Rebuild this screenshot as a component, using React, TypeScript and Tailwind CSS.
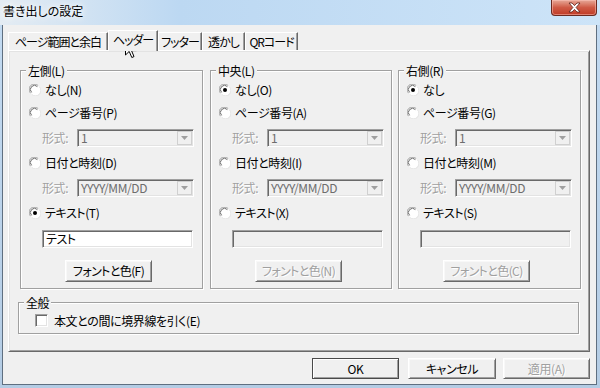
import React from 'react';

const FONT = "[font-family:'Noto_Sans_CJK_JP',sans-serif] [font-feature-settings:'palt'] tracking-[-0.4px]";

const sunken =
  'border-t border-l border-t-[#a0a0a0] border-l-[#a0a0a0] border-b border-r border-b-white border-r-white shadow-[inset_1px_1px_0_#696969,inset_-1px_-1px_0_#e3e3e3]';
const raised =
  'border-t border-l border-t-white border-l-white border-b border-r border-b-[#696969] border-r-[#696969] shadow-[inset_1px_1px_0_#f8f8f8,inset_-1px_-1px_0_#a0a0a0]';
const grayText = 'text-[#a0a0a0] [text-shadow:1px_1px_0_#fff]';

const Radio = ({ checked }: { checked?: boolean }) => (
  <svg width="12" height="12" viewBox="0 0 12 12" className="shrink-0">
    <circle cx="6" cy="6" r="5.5" fill="#fff" />
    <path d="M1.6 9.2 A5 5 0 0 1 9.2 1.6" fill="none" stroke="#a0a0a0" />
    <path d="M2.6 8.4 A4 4 0 0 1 8.4 2.6" fill="none" stroke="#696969" />
    <path d="M10.4 2.8 A5 5 0 0 1 2.8 10.4" fill="none" stroke="#e3e3e3" />
    {checked && <circle cx="6" cy="6" r="2" fill="#000" />}
  </svg>
);

const RadioRow = ({ label, checked, mt }: { label: string; checked?: boolean; mt: string }) => (
  <div className={`${mt} h-[16px] pl-[8px] flex items-center gap-[4px] text-[12px] leading-[16px] text-black`}>
    <Radio checked={checked} />
    <span>{label}</span>
  </div>
);

const Combo = ({ value, mt }: { value: string; mt: string }) => (
  <div className={`${mt} h-[18px] pl-[21px] flex items-center text-[12px]`}>
    <span className={`w-[35px] ${grayText}`}>形式:</span>
    <div className={`w-[117px] h-[18px] flex items-stretch bg-[#f0f0f0] ${sunken}`}>
      <span className="flex-1 pl-[3px] pt-[1px] leading-[14px] text-[#6d6d6d] overflow-hidden">{value}</span>
      <span className="w-[15px] m-[1px] flex items-center justify-center bg-[#f0f0f0] border border-[#d0d0d0]">
        <svg width="7" height="4" viewBox="0 0 7 4">
          <path d="M0 0 H7 L3.5 4 Z" fill="#a0a0a0" />
        </svg>
      </span>
    </div>
  </div>
);

const Group = ({ title, children, className }: { title: string; children: React.ReactNode; className: string }) => (
  <div className={`border border-[#a0a0a0] shadow-[inset_1px_1px_0_#fff,1px_1px_0_#fff] ${className}`}>
    <span className="block w-fit -mt-[8px] ml-[5px] px-[2px] h-[15px] leading-[15px] text-[12px] bg-[#f0f0f0] text-black">
      {title}
    </span>
    {children}
  </div>
);

type Col = {
  title: string;
  none: string;
  page: string;
  date: string;
  text: string;
  font: string;
  noneChecked: boolean;
  enabled: boolean;
  width: string;
};

const cols: Col[] = [
  { title: '左側(L)', none: 'なし(N)', page: 'ページ番号(P)', date: '日付と時刻(D)', text: 'テキスト(T)', font: 'フォントと色(F)', noneChecked: false, enabled: true, width: 'w-[183px]' },
  { title: '中央(L)', none: 'なし(O)', page: 'ページ番号(A)', date: '日付と時刻(I)', text: 'テキスト(X)', font: 'フォントと色(N)', noneChecked: true, enabled: false, width: 'w-[182px]' },
  { title: '右側(R)', none: 'なし', page: 'ページ番号(G)', date: '日付と時刻(M)', text: 'テキスト(S)', font: 'フォントと色(C)', noneChecked: true, enabled: false, width: 'w-[183px]' },
];

const Column = ({ c }: { c: Col }) => (
  <Group title={c.title} className={`${c.width} pb-[6px]`}>
    <RadioRow mt="mt-[4px]" label={c.none} checked={c.noneChecked} />
    <RadioRow mt="mt-[7px]" label={c.page} />
    <Combo mt="mt-[8px]" value="1" />
    <RadioRow mt="mt-[8px]" label={c.date} />
    <Combo mt="mt-[8px]" value="YYYY/MM/DD" />
    <RadioRow mt="mt-[8px]" label={c.text} checked={!c.noneChecked} />
    <div
      className={`mt-[9px] ml-[21px] w-[151px] h-[18px] pl-[3px] text-[12px] leading-[16px] text-black ${sunken} ${c.enabled ? 'bg-white' : 'bg-[#f0f0f0]'}`}
    >
      {c.enabled ? 'テスト' : ''}
    </div>
    <div
      className={`mt-[12px] ml-[44px] w-[87px] h-[22px] flex items-center justify-center text-[12px] tracking-[-0.6px] bg-[#f0f0f0] ${raised} ${c.enabled ? 'text-black' : grayText}`}
    >
      {c.font}
    </div>
  </Group>
);

const tabs = [
  { label: 'ページ範囲と余白', w: 'w-[100px]' },
  { label: 'ヘッダー', w: 'w-[50px]', active: true },
  { label: 'フッター', w: 'w-[44px]' },
  { label: '透かし', w: 'w-[43px]' },
  { label: 'QRコード', w: 'w-[53px]' },
];

const Cursor = () => (
  <svg width="13" height="20" viewBox="0 0 13 20" className="absolute left-[125px] top-[39px]">
    <path d="M0.5 0.5 V16 L4.2 12.4 L6.8 18.5 L9 17.6 L6.5 11.6 H11.5 Z" fill="#fff" stroke="#000" strokeLinejoin="miter" />
  </svg>
);

export default function App() {
  return (
    <div className={`relative w-[600px] h-[388px] flex flex-col overflow-hidden bg-gradient-to-b from-[#c3dbf2] to-[#b4cce4] ${FONT}`}>
      {/* title bar */}
      <div className="h-[25px] shrink-0 flex items-start justify-between bg-gradient-to-r from-[#e4ecf3] via-[#bcd8f2] via-30% to-[#cde4f8]">
        <span className="ml-[3px] mt-[2px] text-[12px] leading-[17px] tracking-normal text-black [text-shadow:0_0_6px_#fff,0_0_10px_#fff]">
          書き出しの設定
        </span>
        <div className="mr-[3px] w-[46px] h-[16px] flex items-center justify-center rounded-b-[4px] border border-t-0 border-[#6b2a20] bg-gradient-to-b from-[#e6a898] via-[#cf5a45] to-[#c03a25] shadow-[inset_0_0_0_1px_rgba(255,200,190,0.5)]">
          <svg width="13" height="11" viewBox="0 0 13 11">
            <path
              d="M1 1 H4 L6.5 3.6 L9 1 H12 L8.1 5.5 L12 10 H9 L6.5 7.4 L4 10 H1 L4.9 5.5 Z"
              fill="#fff"
              stroke="#5a2018"
              strokeWidth="0.8"
              strokeLinejoin="round"
            />
          </svg>
        </div>
      </div>

      {/* client */}
      <div className="flex-1 ml-[2px] mr-[3px] mb-[3px] flex flex-col bg-[#f0f0f0] border-l border-r border-b border-[#5f6f80] pl-[5px] pr-[6px]">
        {/* tabs */}
        <div className="mt-[5px] h-[20px] flex items-end text-[12px] tracking-[-1px] text-black">
          {tabs.map((t) =>
            t.active ? (
              <div
                key={t.label}
                className={`${t.w} h-[21px] -mb-px relative z-10 flex items-center justify-center bg-[#f0f0f0] border-t border-l border-white border-r border-r-[#696969] shadow-[inset_-1px_0_0_#a0a0a0] pb-[2px]`}
              >
                {t.label}
              </div>
            ) : (
              <div
                key={t.label}
                className={`${t.w} h-[18px] flex items-center justify-center bg-[#f0f0f0] border-t border-l border-white border-r border-r-[#696969] shadow-[inset_-1px_0_0_#a0a0a0]`}
              >
                {t.label}
              </div>
            )
          )}
        </div>

        {/* tab page */}
        <div className="h-[302px] shrink-0 flex flex-col pt-[19px] pl-[9px] bg-[#f0f0f0] border-t border-l border-white border-b border-r border-b-[#696969] border-r-[#696969] shadow-[inset_1px_1px_0_#e3e3e3,inset_-1px_-1px_0_#a0a0a0]">
          <div className="flex pl-[2px] gap-[7px]">
            <Column c={cols[0]} />
            <Column c={cols[1]} />
            <div className="-ml-px">
              <Column c={cols[2]} />
            </div>
          </div>
          <Group title="全般" className="mt-[13px] w-[561px] pb-[6px]">
            <div className="mt-[4px] h-[13px] pl-[16px] flex items-center gap-[6px] text-[12px] text-black">
              <span className={`w-[13px] h-[13px] bg-white ${sunken}`} />
              <span>本文との間に境界線を引く(E)</span>
            </div>
          </Group>
        </div>

        {/* buttons */}
        <div className="mt-[6px] flex justify-end text-[12px]">
          <div className="w-[87px] h-[21px] flex items-center justify-center text-black bg-[#f0f0f0] border border-[#4a4a4a] shadow-[inset_1px_1px_0_#fff,inset_-1px_-1px_0_#a0a0a0]">
            OK
          </div>
          <div className={`ml-[9px] w-[88px] h-[21px] flex items-center justify-center text-black bg-[#f0f0f0] ${raised}`}>
            キャンセル
          </div>
          <div className={`ml-[7px] w-[87px] h-[21px] flex items-center justify-center bg-[#f0f0f0] ${raised} ${grayText}`}>
            適用(A)
          </div>
        </div>
      </div>

      <Cursor />
    </div>
  );
}
